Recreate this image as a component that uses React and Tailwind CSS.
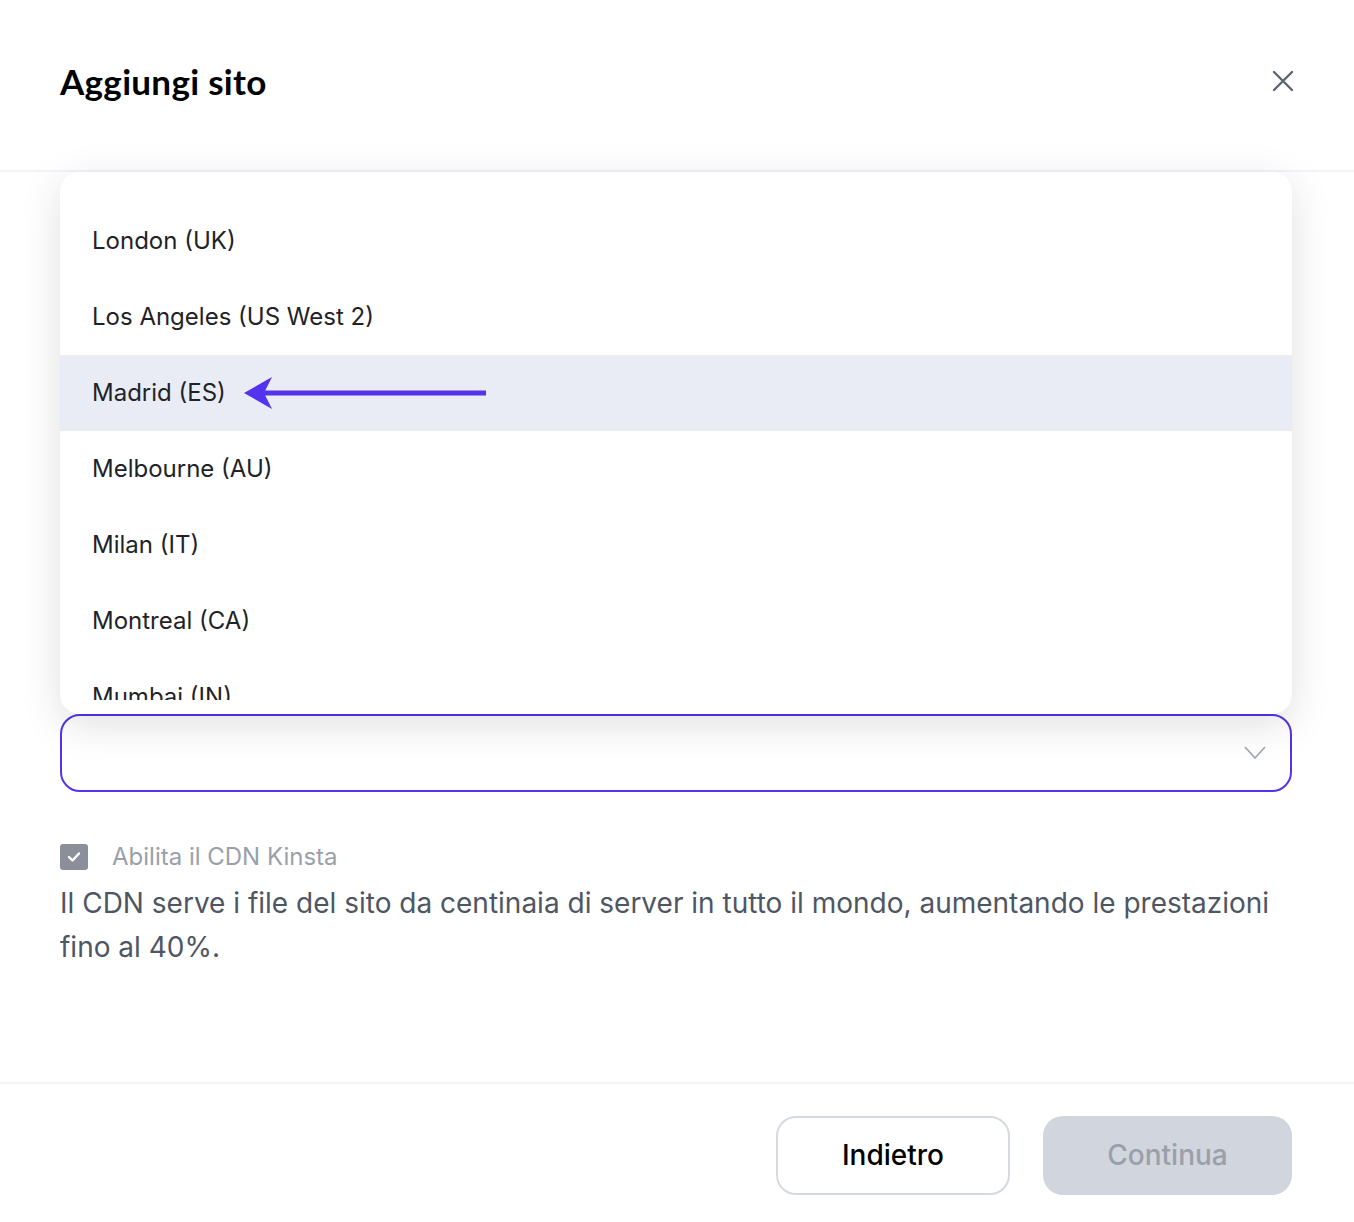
import React from 'react';

const regions = [
  'London (UK)',
  'Los Angeles (US West 2)',
  'Madrid (ES)',
  'Melbourne (AU)',
  'Milan (IT)',
  'Montreal (CA)',
  'Mumbai (IN)',
];

function Arrow() {
  return (
    <svg width="246" height="36" viewBox="0 0 246 36" className="ml-[16px]">
      <path d="M2 18 L30 2 L22 18 L30 34 Z" fill="#5333ed" />
      <rect x="20" y="15.5" width="224" height="5" fill="#5333ed" />
    </svg>
  );
}

export default function App() {
  return (
    <div className="w-[1354px] h-[1222px] bg-white flex flex-col font-['Inter','Liberation_Sans',sans-serif]">
      {/* header */}
      <div className="h-[172px] shrink-0 flex items-center justify-between pl-[60px] pr-[60px] pb-[8px] border-b-2 border-[#f3f3f8]">
        <h1 className="font-['Lato','Liberation_Sans',sans-serif] font-bold text-[35px] text-black tracking-[0.3px]">
          Aggiungi sito
        </h1>
        <button type="button" aria-label="Chiudi" className="text-[#5e6573]">
          <svg width="22" height="22" viewBox="0 0 22 22" fill="none" stroke="currentColor" strokeWidth="2.4" strokeLinecap="round">
            <path d="M2 2 L20 20 M20 2 L2 20" />
          </svg>
        </button>
      </div>

      {/* body */}
      <div className="relative flex-1 pl-[60px] pr-[62px] pt-[542px]">
        <div className="h-[78px] rounded-[20px] border-2 border-[#5333ed] flex items-center justify-end pr-[24px]">
          <svg width="22" height="14" viewBox="0 0 22 14" fill="none" stroke="#a3a8b3" strokeWidth="1.8">
            <path d="M1 1 L11 12 L21 1" />
          </svg>
        </div>

        <div className="mt-[47px] flex items-center gap-[24px]">
          <div className="w-[28px] h-[26px] rounded-[3px] bg-[#8a8f9a] flex items-center justify-center">
            <svg width="14" height="12" viewBox="0 0 14 12" fill="none" stroke="white" strokeWidth="2.4" strokeLinecap="round" strokeLinejoin="round">
              <path d="M2 6 L5.5 9.5 L12 2.5" />
            </svg>
          </div>
          <span className="text-[24px] text-[#9aa0aa]">Abilita il CDN Kinsta</span>
        </div>
        <p className="mt-[6px] text-[28px] leading-[44px] text-[#4f5663]">
          Il CDN serve i file del sito da centinaia di server in tutto il mondo, aumentando le prestazioni fino al 40%.
        </p>

        {/* dropdown overlay */}
        <div className="absolute left-[60px] top-0 w-[1232px] h-[542px] bg-white rounded-[20px] shadow-[0_10px_40px_rgba(0,0,0,0.13)] pb-[14px] overflow-hidden">
          <div className="h-full overflow-hidden pt-[31px]">
            {regions.map((r) => (
              <div
                key={r}
                className={`h-[76px] flex items-center pl-[32px] text-[24px] text-[#1f2328] ${r === 'Madrid (ES)' ? 'bg-[#eaecf5]' : ''}`}
              >
                {r}
                {r === 'Madrid (ES)' && <Arrow />}
              </div>
            ))}
          </div>
        </div>
      </div>

      {/* footer */}
      <div className="h-[140px] shrink-0 border-t-2 border-[#f3f3f8] flex items-center justify-end gap-[33px] pr-[62px] pt-[4px]">
        <button type="button" className="w-[234px] h-[79px] rounded-[20px] border-2 border-[#d5d9e0] bg-white text-[28px] font-medium text-black">
          Indietro
        </button>
        <button type="button" className="w-[249px] h-[79px] rounded-[20px] bg-[#d1d5dd] text-[28px] font-medium text-[#9aa0aa]">
          Continua
        </button>
      </div>
    </div>
  );
}
